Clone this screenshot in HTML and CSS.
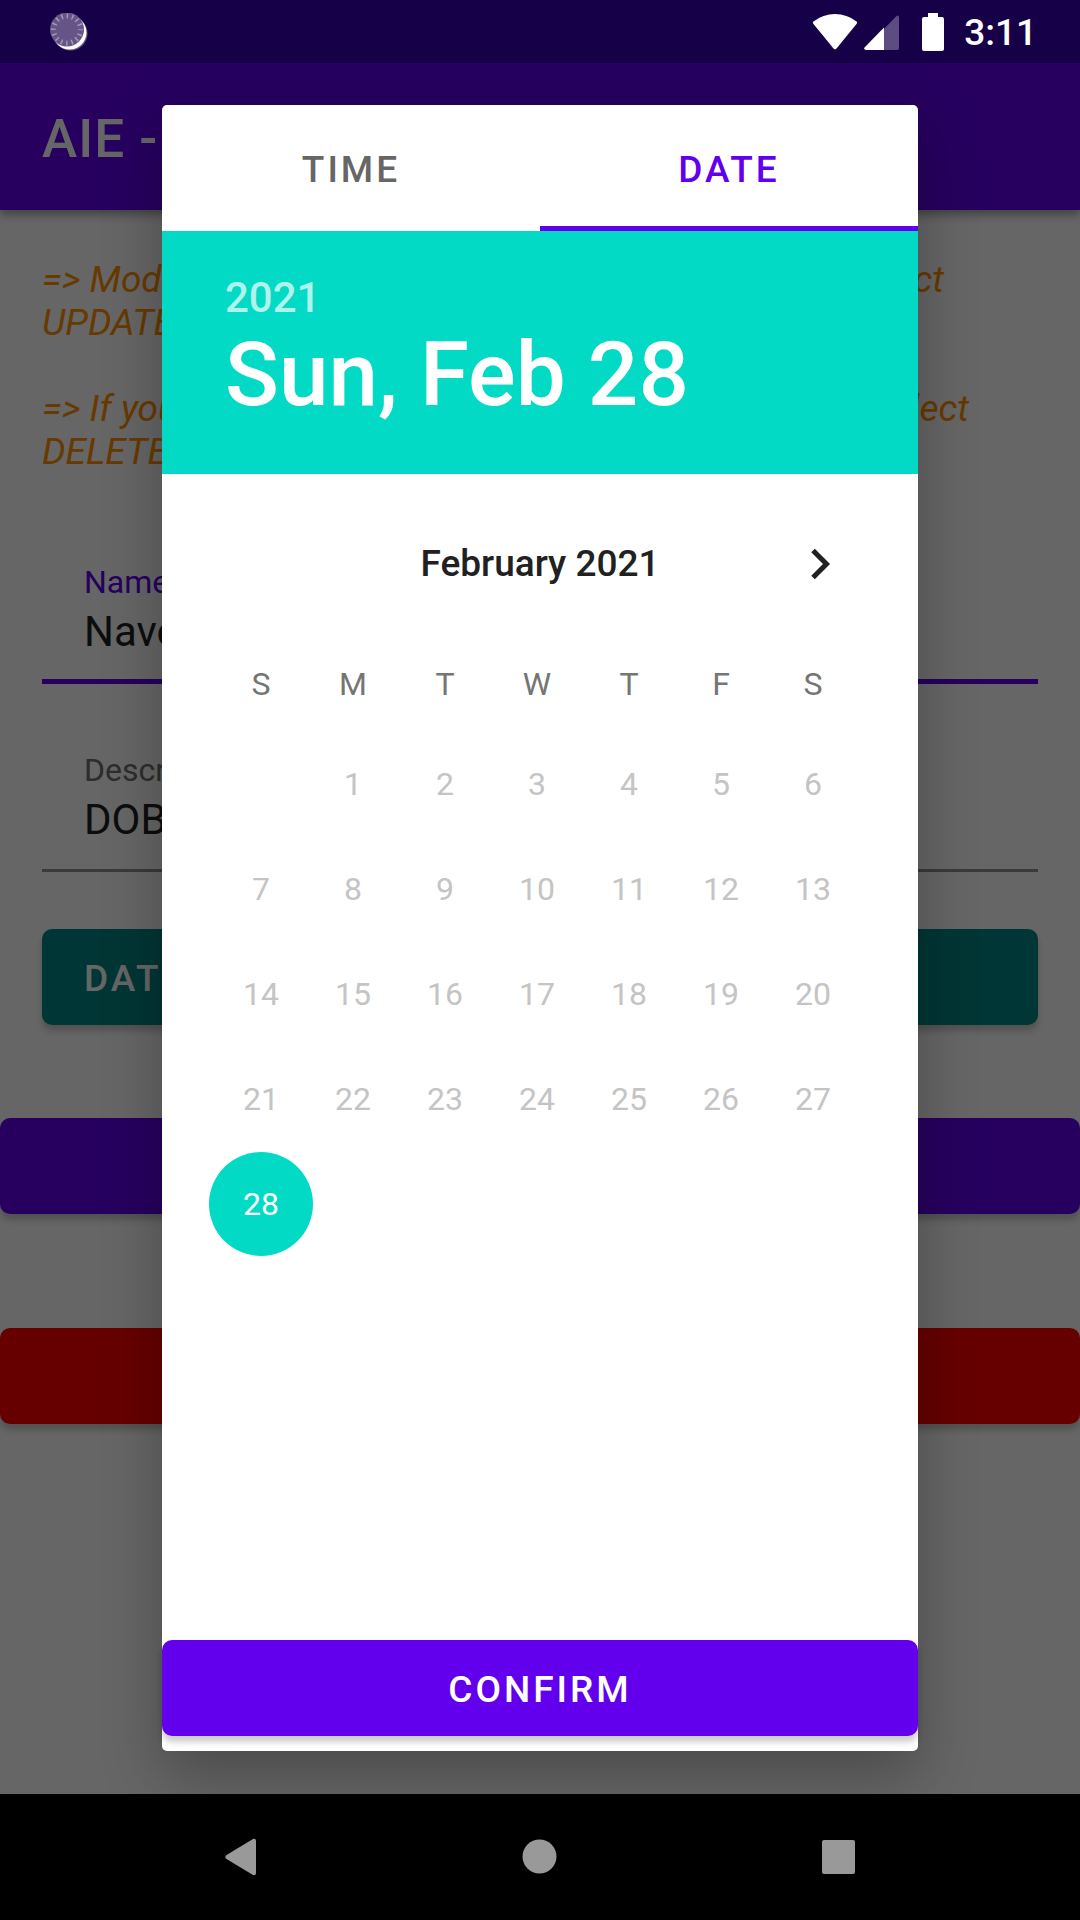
FILE: index.html
```html
<!DOCTYPE html>
<html lang="en">
<head>
<meta charset="utf-8">
<meta name="viewport" content="width=device-width, initial-scale=1">
<title>AIE - Edit</title>
<link rel="stylesheet" href="styles.css">
</head>
<body>
<div class="screen">
  <header class="status-bar">
    <svg class="sync-icon" width="38" height="38" viewBox="0 0 38 38" aria-hidden="true">
      <circle cx="20.500" cy="20.500" r="17" fill="#665486"/>
      <circle cx="19.500" cy="19.500" r="17" fill="#fff"/>
      <circle cx="17" cy="16.500" r="17" fill="#665486"/>
      <circle cx="17" cy="16.500" r="13.500" fill="none" stroke="#a398b8" stroke-width="5" stroke-dasharray="1.500 3.801" stroke-dashoffset=".75"/>
    </svg>
    <div class="status-icons">
      <svg width="46" height="38" viewBox="0 0 46 38" aria-hidden="true"><path d="M1.500 8.500Q.3 9.500 1.300 10.800L21.500 35.600Q23 37.200 24.500 35.600L44.700 10.800Q45.700 9.500 44.500 8.500Q35 1 23 1T1.500 8.500Z" fill="#fff"/></svg>
      <svg class="signal-icon" width="36" height="38" viewBox="0 0 36 38" aria-hidden="true"><path d="M20 16L32 3.500Q35 1 35 5V35Q35 37 33 37H20Z" fill="#5d4c80"/><path d="M20 14.500V37H2Q-.5 36.500 .5 34.500Z" fill="#fff"/></svg>
      <svg width="22" height="38" viewBox="0 0 22 38" aria-hidden="true"><path d="M6 0H16V4H20Q22 4 22 6V36Q22 38 20 38H2Q0 38 0 36V6Q0 4 2 4H6Z" fill="#fff"/></svg>
      <time>3:11</time>
    </div>
  </header>

  <div class="app-bar"><h1>AIE - Edit</h1></div>

  <main class="content">
    <div class="hints">
      <p class="hint-update"><span>=&gt; Modify</span> <span>select</span></p>
      <p>UPDATE</p>
      <p class="hint-delete"><span>=&gt; If you</span> <span>select</span></p>
      <p>DELETE</p>
    </div>
    <form class="event-form">
      <div class="field field-active">
        <label for="name">Name</label>
        <input id="name" type="text" value="Naveen">
      </div>
      <div class="field">
        <label for="description">Description</label>
        <input id="description" type="text" value="DOB">
      </div>
      <button class="button button-teal" type="button">DATE</button>
    </form>
    <div class="actions">
      <button class="button button-primary" type="button" aria-label="Update"></button>
      <button class="button button-danger" type="button" aria-label="Delete"></button>
    </div>
  </main>

  <nav class="system-nav" aria-label="System">
    <button type="button" aria-label="Back"><svg width="38" height="38" viewBox="0 0 38 38"><path d="M31 1Q34 0 34 3V35Q34 38 31 37L4.500 21Q2 19 4.500 17Z"/></svg></button>
    <button type="button" aria-label="Home"><svg width="38" height="38" viewBox="0 0 38 38"><circle cx="18.500" cy="18.500" r="17"/></svg></button>
    <button type="button" aria-label="Recent apps"><svg width="38" height="38" viewBox="0 0 38 38"><rect x="2" y="2" width="33" height="34" rx="2"/></svg></button>
  </nav>

  <div class="scrim">
    <section class="dialog" role="dialog" aria-label="Select date">
      <div class="tabs" role="tablist">
        <button class="tab" type="button" role="tab" aria-selected="false">TIME</button>
        <button class="tab" type="button" role="tab" aria-selected="true">DATE</button>
      </div>
      <div class="date-header">
        <button class="year" type="button">2021</button>
        <div class="date">Sun, Feb 28</div>
      </div>
      <div class="calendar">
        <div class="month-row">
          <h2>February 2021</h2>
          <button class="next" type="button" aria-label="Next month"><svg width="22" height="32" viewBox="0 0 22 32"><path d="M3 2.500L16.500 16L3 29.500" fill="none" stroke="#212121" stroke-width="5"/></svg></button>
        </div>
        <table class="days">
          <thead><tr><th>S</th><th>M</th><th>T</th><th>W</th><th>T</th><th>F</th><th>S</th></tr></thead>
          <tbody>
            <tr><td></td><td>1</td><td>2</td><td>3</td><td>4</td><td>5</td><td>6</td></tr>
            <tr><td>7</td><td>8</td><td>9</td><td>10</td><td>11</td><td>12</td><td>13</td></tr>
            <tr><td>14</td><td>15</td><td>16</td><td>17</td><td>18</td><td>19</td><td>20</td></tr>
            <tr><td>21</td><td>22</td><td>23</td><td>24</td><td>25</td><td>26</td><td>27</td></tr>
            <tr><td><button class="selected" type="button">28</button></td><td></td><td></td><td></td><td></td><td></td><td></td></tr>
          </tbody>
        </table>
      </div>
      <button class="button button-primary" type="button">CONFIRM</button>
    </section>
  </div>
</div>
</body>
</html>
```
FILE: styles.css
```css
* { box-sizing: border-box; }

body {
  margin: 0;
  background: #fff;
  color: #212121;
  font-family: Roboto, "Liberation Sans", sans-serif;
}

h1, h2, p { margin: 0; font-weight: 500; }

button, input { font: inherit; border: 0; padding: 0; }

button { background: none; cursor: pointer; }

svg { display: block; }

.screen {
  position: relative;
  display: flex;
  flex-direction: column;
  min-height: 100vh;
}

/* System bars stay above the scrim */
.status-bar {
  position: relative;
  z-index: 2;
  display: flex;
  align-items: center;
  justify-content: space-between;
  height: 63px;
  padding: 0 43px 0 50px;
  background: #160048;
  color: #fff;
}

.status-icons { display: flex; align-items: center; gap: 20px; }

.signal-icon { margin: 0 2px 0 -14px; }

.status-icons time {
  padding-top: 2px;
  font-size: 37px;
  font-weight: 500;
  line-height: 44px;
}

.app-bar {
  display: flex;
  align-items: center;
  height: 147px;
  padding: 4px 42px 0;
  background: #6200ee;
  box-shadow: 0 4px 10px rgba(0, 0, 0, 0.4);
  color: #fff;
}

.app-bar h1 { font-size: 53px; letter-spacing: 1px; line-height: 62px; }

.content { flex: 1; padding-top: 48px; }

.hints {
  padding: 0 42px;
  color: #ff9100;
  font-size: 37px;
  font-style: italic;
  line-height: 43px;
}

.hints p { font-weight: 400; }

.hint-update, .hint-delete { display: flex; justify-content: space-between; }

.hint-update { padding-right: 94px; }

.hint-delete { padding-top: 43px; padding-right: 69px; }

.event-form {
  display: grid;
  gap: 41px;
  padding: 64px 42px 0;
}

.field {
  display: flex;
  flex-direction: column;
  height: 147px;
  padding: 26px 42px 0;
  border-bottom: 3px solid #929292;
}

.field label { color: #707070; font-size: 32px; line-height: 38px; }

.field input {
  width: 100%;
  height: 60px;
  background: none;
  color: #212121;
  font-size: 42px;
}

.field-active { border-bottom: 5px solid #6200ee; }

.field-active label { color: #6200ee; }

.button {
  height: 96px;
  padding-top: 2px;
  border-radius: 10px;
  box-shadow: 0 6px 6px rgba(0, 0, 0, 0.2);
  color: #fff;
  font-size: 37px;
  font-weight: 500;
  letter-spacing: 3px;
}

.button-primary { background: #6200ee; }

.button-danger { background: #f00; }

.button-teal {
  margin-top: 16px;
  padding: 2px 42px 0;
  background: #018786;
  text-align: left;
}

.actions { display: grid; gap: 114px; padding: 93px 0; }

.system-nav {
  position: relative;
  z-index: 2;
  display: grid;
  grid-template-columns: repeat(3, 1fr);
  height: 126px;
  padding: 0 92px;
  background: #000;
  fill: #999;
}

.system-nav button { display: grid; place-items: center; }

/* Date picker dialog */
.scrim {
  position: absolute;
  inset: 63px 0 126px;
  z-index: 1;
  display: flex;
  justify-content: center;
  padding: 42px 15% 43px;
  overflow: hidden;
  background: rgba(0, 0, 0, 0.6);
}

.dialog {
  display: flex;
  flex: 1;
  flex-direction: column;
  padding-bottom: 15px;
  border-radius: 5px;
  background: #fff;
  box-shadow: 0 24px 60px rgba(0, 0, 0, 0.28);
}

.tabs { display: grid; grid-template-columns: 1fr 1fr; height: 126px; }

.tab {
  padding-top: 7px;
  border-bottom: 5px solid transparent;
  color: #666;
  font-size: 37px;
  font-weight: 500;
  letter-spacing: 3px;
}

.tab[aria-selected="true"] { border-color: #6200ee; color: #6200ee; }

.date-header {
  height: 243px;
  padding: 42px 63px;
  background: #03dac5;
  color: #fff;
}

.year {
  display: block;
  color: rgba(255, 255, 255, 0.7);
  font-size: 42px;
  font-weight: 500;
  line-height: 49px;
}

.date { font-size: 89px; font-weight: 500; line-height: 106px; }

.calendar { flex: 1; padding: 42px 59px 0 53px; }

.month-row {
  display: grid;
  grid-template-columns: 92px 1fr 92px;
  align-items: center;
  height: 96px;
  margin: 0 -6px 0 0;
}

.month-row h2 {
  grid-column: 2;
  font-size: 37px;
  line-height: 44px;
  text-align: center;
}

.next {
  display: grid;
  place-items: center;
  height: 96px;
  padding-left: 4px;
}

.days {
  width: 100%;
  border-collapse: collapse;
  table-layout: fixed;
  font-size: 32px;
  text-align: center;
}

.days th {
  height: 119px;
  padding: 25px 0 0;
  color: #757575;
  font-weight: 400;
  line-height: 38px;
}

.days th, .days td { vertical-align: middle; }

.days td { height: 105px; padding: 0; color: #c4c4c4; }

.days .selected {
  width: 104px;
  height: 104px;
  margin: 0 -6px;
  border-radius: 50%;
  background: #03dac5;
  color: #fff;
}
```
